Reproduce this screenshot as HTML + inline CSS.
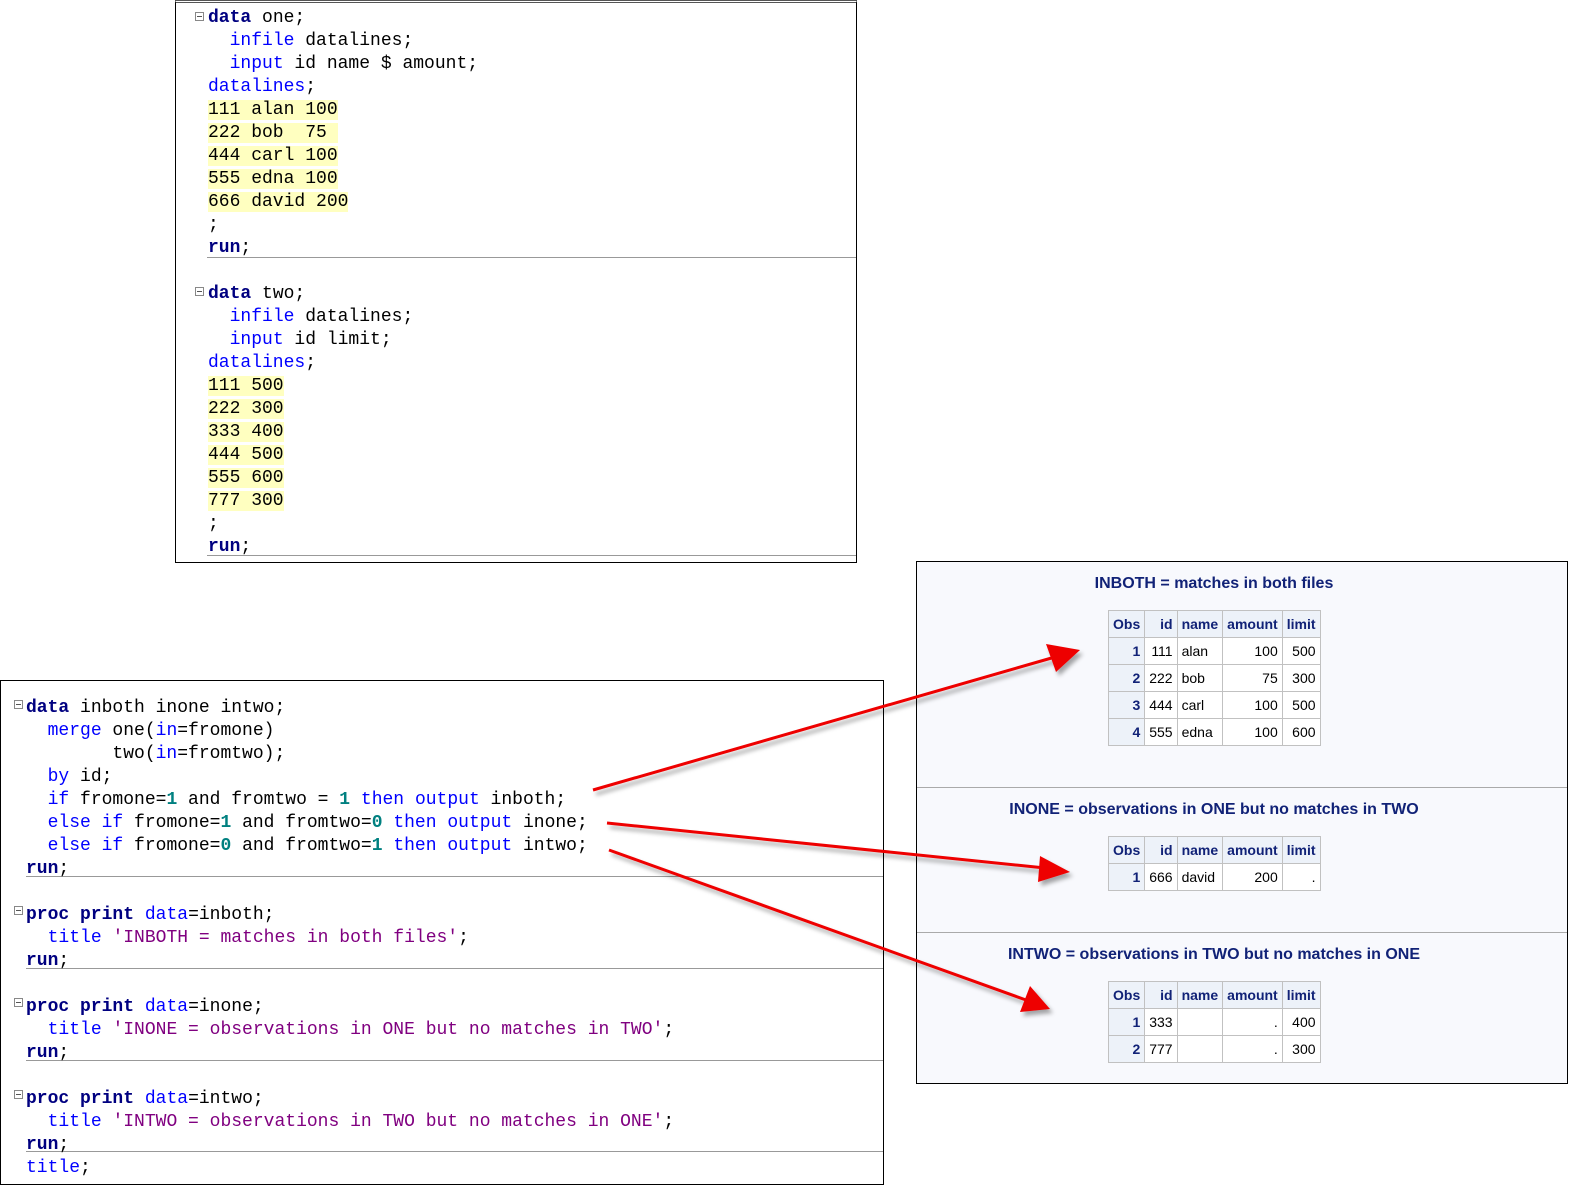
<!DOCTYPE html>
<html><head><meta charset="utf-8"><style>
body{margin:0;width:1574px;height:1190px;background:#fff;position:relative;overflow:hidden}
.box{position:absolute;border:1px solid #000;background:#fff}
.code{position:absolute;font-family:"Liberation Mono",monospace;font-size:18px;line-height:23px;white-space:pre;color:#000}
.k{color:#000080;font-weight:bold}.b{color:#0000ff}.n{color:#008080;font-weight:bold}.s{color:#800080}
.y{background:#ffffc0}
.fold{position:absolute;width:7px;height:7px;border:1px solid #888;font-size:0}
.fold:after{content:"";position:absolute;left:1px;top:3px;width:5px;height:1px;background:#555}
.sep{position:absolute;height:1px;background:#999}
.panel{position:absolute;left:916px;top:561px;width:650px;height:521px;border:1px solid #000;background:#f8f9fd}
.ttl{position:absolute;left:0;width:594px;text-align:center;font-family:"Liberation Sans",Arial,sans-serif;font-weight:bold;font-size:16px;color:#112277}
table{position:absolute;border-collapse:collapse;font-family:"Liberation Sans",Arial,sans-serif;font-size:14px;background:#fff}
td,th{border:1px solid #c1c1c1;height:26px;padding:0 4px;text-align:right}
th{background:#edf2f9;color:#112277;font-weight:bold}
td.o{background:#edf2f9;color:#112277;font-weight:bold}
td.l{text-align:left}
</style></head><body>

<div class="box" style="left:175px;top:0;width:680px;height:559px;border-top:3px double #555"></div>
<div class="fold" style="left:195px;top:12px"></div>
<div class="fold" style="left:195px;top:287px"></div>
<div class="sep" style="left:207px;top:257px;width:649px"></div>
<div class="sep" style="left:207px;top:555px;width:649px"></div>
<div class="code" style="left:208px;top:7px"><span class="k">data</span> one;
  <span class="b">infile</span> datalines;
  <span class="b">input</span> id name $ amount;
<span class="b">datalines</span>;
<span class="y">111 alan 100</span>
<span class="y">222 bob  75 </span>
<span class="y">444 carl 100</span>
<span class="y">555 edna 100</span>
<span class="y">666 david 200</span>
;
<span class="k">run</span>;

<span class="k">data</span> two;
  <span class="b">infile</span> datalines;
  <span class="b">input</span> id limit;
<span class="b">datalines</span>;
<span class="y">111 500</span>
<span class="y">222 300</span>
<span class="y">333 400</span>
<span class="y">444 500</span>
<span class="y">555 600</span>
<span class="y">777 300</span>
;
<span class="k">run</span>;</div>

<div class="box" style="left:0;top:680px;width:882px;height:503px"></div>
<div class="fold" style="left:14px;top:700px"></div>
<div class="fold" style="left:14px;top:906px"></div>
<div class="fold" style="left:14px;top:998px"></div>
<div class="fold" style="left:14px;top:1090px"></div>
<div class="sep" style="left:26px;top:876px;width:857px"></div>
<div class="sep" style="left:26px;top:968px;width:857px"></div>
<div class="sep" style="left:26px;top:1060px;width:857px"></div>
<div class="sep" style="left:26px;top:1151px;width:857px"></div>
<div class="code" style="left:26px;top:697px"><span class="k">data</span> inboth inone intwo;
  <span class="b">merge</span> one(<span class="b">in</span>=fromone)
        two(<span class="b">in</span>=fromtwo);
  <span class="b">by</span> id;
  <span class="b">if</span> fromone=<span class="n">1</span> and fromtwo = <span class="n">1</span> <span class="b">then</span> <span class="b">output</span> inboth;
  <span class="b">else if</span> fromone=<span class="n">1</span> and fromtwo=<span class="n">0</span> <span class="b">then</span> <span class="b">output</span> inone;
  <span class="b">else if</span> fromone=<span class="n">0</span> and fromtwo=<span class="n">1</span> <span class="b">then</span> <span class="b">output</span> intwo;
<span class="k">run</span>;

<span class="k">proc print</span> <span class="b">data</span>=inboth;
  <span class="b">title</span> <span class="s">'INBOTH = matches in both files'</span>;
<span class="k">run</span>;

<span class="k">proc print</span> <span class="b">data</span>=inone;
  <span class="b">title</span> <span class="s">'INONE = observations in ONE but no matches in TWO'</span>;
<span class="k">run</span>;

<span class="k">proc print</span> <span class="b">data</span>=intwo;
  <span class="b">title</span> <span class="s">'INTWO = observations in TWO but no matches in ONE'</span>;
<span class="k">run</span>;
<span class="b">title</span>;</div>

<div class="panel">
<div class="sep" style="left:0;top:225px;width:650px;background:#aaa"></div>
<div class="sep" style="left:0;top:370px;width:650px;background:#aaa"></div>
<div class="ttl" style="top:13px">INBOTH = matches in both files</div>
<table style="left:191px;top:48px">
<tr><th>Obs</th><th>id</th><th>name</th><th>amount</th><th>limit</th></tr>
<tr><td class="o">1</td><td>111</td><td class="l">alan</td><td>100</td><td>500</td></tr>
<tr><td class="o">2</td><td>222</td><td class="l">bob</td><td>75</td><td>300</td></tr>
<tr><td class="o">3</td><td>444</td><td class="l">carl</td><td>100</td><td>500</td></tr>
<tr><td class="o">4</td><td>555</td><td class="l">edna</td><td>100</td><td>600</td></tr>
</table>
<div class="ttl" style="top:239px">INONE = observations in ONE but no matches in TWO</div>
<table style="left:191px;top:274px">
<tr><th>Obs</th><th>id</th><th>name</th><th>amount</th><th>limit</th></tr>
<tr><td class="o">1</td><td>666</td><td class="l">david</td><td>200</td><td>.</td></tr>
</table>
<div class="ttl" style="top:384px">INTWO = observations in TWO but no matches in ONE</div>
<table style="left:191px;top:419px">
<tr><th>Obs</th><th>id</th><th>name</th><th>amount</th><th>limit</th></tr>
<tr><td class="o">1</td><td>333</td><td class="l"></td><td>.</td><td>400</td></tr>
<tr><td class="o">2</td><td>777</td><td class="l"></td><td>.</td><td>300</td></tr>
</table>
</div>

<svg style="position:absolute;left:0;top:0" width="1574" height="1190">
<defs><filter id="sh"><feDropShadow dx="3" dy="4" stdDeviation="2" flood-opacity="0.35"/></filter></defs>
<g fill="#ee0000" stroke="#ee0000" filter="url(#sh)">
<line x1="593" y1="790" x2="1055" y2="657" stroke-width="3"/>
<polygon points="1080,650 1046,644 1056,672" stroke="none"/>
<line x1="607" y1="823" x2="1045" y2="868" stroke-width="3"/>
<polygon points="1070,872 1040,856 1038,882" stroke="none"/>
<line x1="609" y1="850" x2="1026" y2="1000" stroke-width="3"/>
<polygon points="1050,1009 1030,986 1020,1012" stroke="none"/>
</g>
</svg>
</body></html>
